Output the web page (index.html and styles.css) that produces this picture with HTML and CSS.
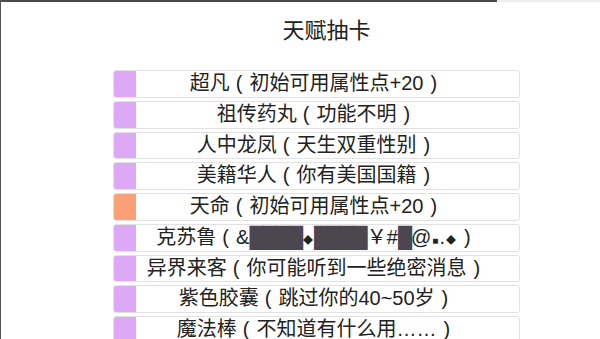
FILE: index.html
```html
<!DOCTYPE html>
<html lang="zh-CN">
<head>
    <meta charset="UTF-8">
    <meta name="viewport" content="width=device-width, initial-scale=1.0">
    <title>天赋抽卡</title>
    <link rel="stylesheet" href="styles.css">
</head>
<body>
    <div class="topline">
        <div class="topline-dark"></div>
        <div class="topline-light"></div>
    </div>
    <div class="page">
        <h1 class="title">天赋抽卡</h1>
        <ul class="cards">
            <li class="card"><span class="tag purple"></span><span class="name">超凡<span class="lp">(</span>初始可用属性点+20<span class="rp">)</span></span></li>
            <li class="card"><span class="tag purple"></span><span class="name">祖传药丸<span class="lp">(</span>功能不明<span class="rp">)</span></span></li>
            <li class="card"><span class="tag purple"></span><span class="name">人中龙凤<span class="lp">(</span>天生双重性别<span class="rp">)</span></span></li>
            <li class="card"><span class="tag purple"></span><span class="name">美籍华人<span class="lp">(</span>你有美国国籍<span class="rp">)</span></span></li>
            <li class="card"><span class="tag orange"></span><span class="name">天命<span class="lp">(</span>初始可用属性点+20<span class="rp">)</span></span></li>
            <li class="card"><span class="tag purple"></span><span class="name">克苏鲁<span class="lp">(</span>&amp;<span class="noise">████</span><span class="sym">◆</span><span class="noise">████</span>￥#<span class="noise">█</span>@<span class="sym">■</span>.<span class="sym">◆</span><span class="rp">)</span></span></li>
            <li class="card"><span class="tag purple"></span><span class="name">异界来客<span class="lp">(</span>你可能听到一些绝密消息<span class="rp">)</span></span></li>
            <li class="card"><span class="tag purple"></span><span class="name">紫色胶囊<span class="lp">(</span>跳过你的40~50岁<span class="rp">)</span></span></li>
            <li class="card"><span class="tag purple"></span><span class="name">魔法棒<span class="lp">(</span>不知道有什么用……<span class="rp">)</span></span></li>
        </ul>
    </div>
</body>
</html>
```

FILE: styles.css
```css
body {
    margin: 0;
    height: 339px;
    overflow: hidden;
    background-color: #ffffff;
    border-left: 1px solid #555555;
    font-family: "Noto Sans CJK SC", "Noto Sans", sans-serif;
    color: #222222;
}
.topline {
    display: flex;
    height: 2px;
}
.topline-dark {
    width: 496px;
    background-color: #4a4a4a;
}
.topline-light {
    flex: 1;
    background-color: #eeeeee;
}
.page {
    margin-left: 112px;
    width: 407px;
}
.title {
    margin: 10px 0 0;
    height: 32px;
    line-height: 32px;
    font-size: 22px;
    font-weight: normal;
    text-align: center;
    padding-left: 20px;
}
.cards {
    list-style: none;
    margin: 26px 0 0;
    padding: 0;
    display: flex;
    flex-direction: column;
    gap: 3px;
}
.card {
    display: flex;
    height: 27.75px;
    box-sizing: border-box;
    border: 1px solid #e2e2e2;
    border-radius: 3px;
    overflow: hidden;
}
.tag {
    width: 22px;
    flex-shrink: 0;
}
.purple {
    background-color: #dda9f7;
}
.orange {
    background-color: #fb9f78;
}
.name {
    flex: 1;
    text-align: center;
    font-family: "Liberation Sans", "Noto Sans CJK SC", sans-serif;
    font-size: 20px;
    line-height: 25px;
    white-space: nowrap;
    padding-right: 22px;
}
.lp {
    padding: 0 7px 0 6px;
}
.rp {
    padding: 0 6px 0 7px;
}
.noise {
    color: #4b4650;
    letter-spacing: -1px;
}
.sym {
    font-size: 10px;
    margin: 0 1px;
}
```
